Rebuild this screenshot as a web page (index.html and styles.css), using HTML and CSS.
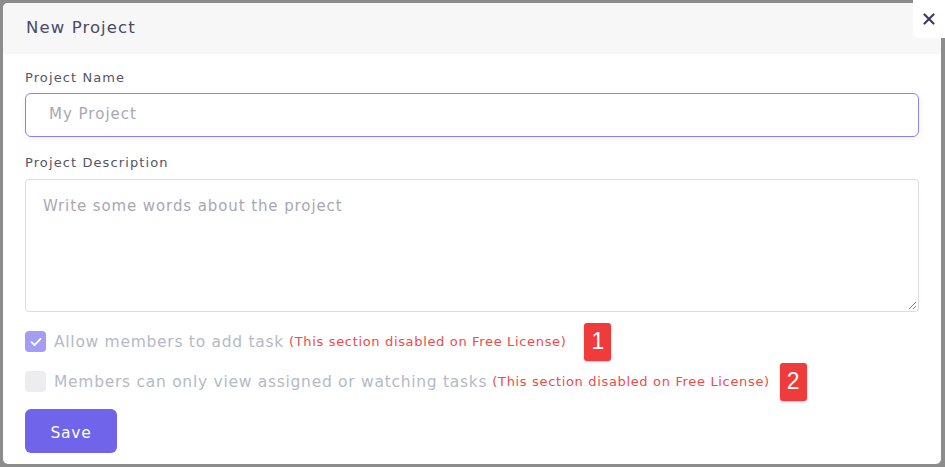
FILE: index.html
```html
<!DOCTYPE html>
<html>
<head>
<meta charset="utf-8">
<link rel="stylesheet" href="styles.css">
</head>
<body>
<div class="modal">
  <div class="modal-header">New Project</div>
  <button class="close" aria-label="Close">
    <svg width="12" height="12" viewBox="0 0 12 12"><path d="M1.5 1.5L10.5 10.5M10.5 1.5L1.5 10.5" stroke="#3f3d5c" stroke-width="2.2" stroke-linecap="round"/></svg>
  </button>
  <div class="modal-body">
    <label class="field-label">Project Name</label>
    <div class="input focus">My Project</div>
    <label class="field-label desc-label">Project Description</label>
    <div class="textarea">Write some words about the project
      <svg class="grip" width="10" height="10" viewBox="0 0 10 10"><path d="M9 2L2 9M9 6L6 9" stroke="#888" stroke-width="1"/></svg>
    </div>
    <div class="check-row row1">
      <span class="box checked">
        <svg width="12" height="10" viewBox="0 0 12 10"><path d="M1.5 5.2L4.5 8L10.5 1.8" fill="none" stroke="#fff" stroke-width="1.8" stroke-linecap="round" stroke-linejoin="round"/></svg>
      </span>
      <span class="check-text">Allow members to add task</span>
      <span class="warn">(This section disabled on Free License)</span>
      <span class="badge">1</span>
    </div>
    <div class="check-row row2">
      <span class="box"></span>
      <span class="check-text">Members can only view assigned or watching tasks</span>
      <span class="warn">(This section disabled on Free License)</span>
      <span class="badge">2</span>
    </div>
    <button class="save">Save</button>
  </div>
</div>
</body>
</html>
```
FILE: styles.css
```css
html, body {
  margin: 0;
  padding: 0;
  width: 945px;
  height: 467px;
  overflow: hidden;
  background: #8c8c8c;
  font-family: "DejaVu Sans", sans-serif;
}
.modal {
  position: relative;
  margin: 3px 0 0 3px;
  width: 938px;
  height: 461px;
  background: #fff;
  border-radius: 5px;
  overflow: visible;
}
.modal-header {
  height: 51px;
  background: #f7f7f7;
  border-radius: 5px 0 0 0;
  padding-left: 23px;
  box-sizing: border-box;
  line-height: 50px;
  font-size: 16.5px;
  letter-spacing: 1.1px;
  color: #4a4a66;
}
.close {
  position: absolute;
  top: -3px;
  right: -4px;
  width: 32px;
  height: 38px;
  background: #fff;
  border: none;
  border-radius: 0 0 0 5px;
  display: flex;
  align-items: center;
  justify-content: center;
  padding: 0;
}
.modal-body {
  padding: 16px 22px 0 22px;
  display: flex;
  flex-direction: column;
  align-items: flex-start;
}
.field-label {
  font-size: 13px;
  letter-spacing: 1.1px;
  color: #555566;
  line-height: 16px;
  height: 16px;
}
.input {
  margin-top: 7px;
  width: 894px;
  height: 44px;
  box-sizing: border-box;
  border: 1.5px solid #8d80f5;
  border-radius: 6px;
  padding-left: 23px;
  line-height: 41px;
  font-size: 15px;
  letter-spacing: 1px;
  color: #a8a8b2;
  box-shadow: 0 2px 6px rgba(0,0,0,0.06);
}
.desc-label {
  margin-top: 18px;
}
.textarea {
  position: relative;
  margin-top: 8px;
  width: 894px;
  height: 133px;
  box-sizing: border-box;
  border: 1px solid #dcdce2;
  border-radius: 4px;
  padding: 16px 0 0 17px;
  font-size: 15px;
  letter-spacing: 0.9px;
  line-height: 20px;
  color: #a8a8b2;
}
.grip {
  position: absolute;
  right: 1px;
  bottom: 1px;
}
.check-row {
  display: flex;
  align-items: center;
  height: 21px;
}
.row1 { margin-top: 19px; }
.row2 { margin-top: 19px; }
.box {
  width: 21px;
  height: 21px;
  border-radius: 4px;
  background: #ededf0;
  display: flex;
  align-items: center;
  justify-content: center;
  flex: none;
}
.box.checked {
  background: #a59cf3;
}
.check-text {
  margin-left: 8px;
  font-size: 15.5px;
  letter-spacing: 0.72px;
  color: #b4bac6;
}
.warn {
  margin-left: 5px;
  font-size: 13px;
  letter-spacing: 0.66px;
  color: #f04a4a;
}
.badge {
  margin-left: 18px;
  width: 27px;
  height: 38px;
  background: #ef3b3b;
  border-radius: 3px;
  color: #fff;
  font-family: "Liberation Sans", sans-serif;
  font-size: 23px;
  display: flex;
  align-items: center;
  justify-content: center;
  box-shadow: 0 1px 2px rgba(0,0,0,0.2);
  flex: none;
}
.row2 .badge {
  margin-left: 10px;
}
.save {
  margin-top: 17px;
  width: 92px;
  height: 44px;
  background: #7064ea;
  border: none;
  border-radius: 6px;
  color: #fff;
  font-family: "DejaVu Sans", sans-serif;
  font-size: 15.5px;
  letter-spacing: 0.75px;
  padding: 3px 0 0 0;
}
```
